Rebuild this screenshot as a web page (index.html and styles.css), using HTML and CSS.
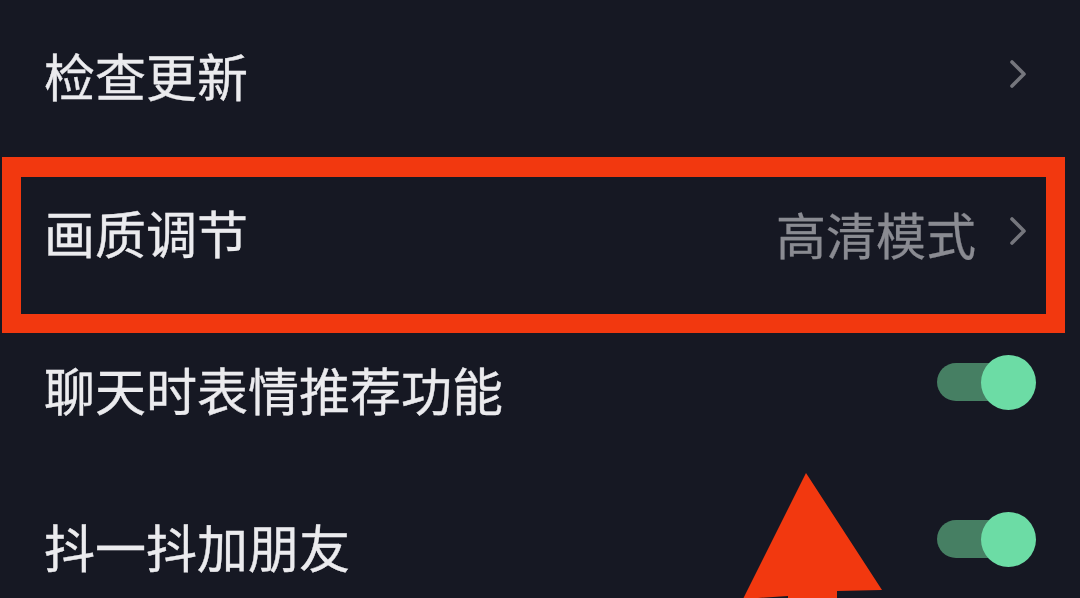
FILE: index.html
```html
<!DOCTYPE html>
<html lang="zh-CN">
<head>
<meta charset="utf-8">
<link rel="stylesheet" href="styles.css">
</head>
<body>
<div class="screen">
  <ul class="list">
    <li class="row">
      <span class="label">检查更新</span>
      <svg class="chev" viewBox="0 0 20 32" width="20" height="32"><path d="M4 4 L16 16 L4 28" /></svg>
    </li>
    <li class="row">
      <span class="label">画质调节</span>
      <span class="value">高清模式</span>
      <svg class="chev" viewBox="0 0 20 32" width="20" height="32"><path d="M4 4 L16 16 L4 28" /></svg>
    </li>
    <li class="row">
      <span class="label">聊天时表情推荐功能</span>
      <span class="toggle"><span class="knob"></span></span>
    </li>
    <li class="row">
      <span class="label">抖一抖加朋友</span>
      <span class="toggle"><span class="knob"></span></span>
    </li>
  </ul>
  <div class="highlight"></div>
  <svg class="arrow" viewBox="0 0 1080 598" width="1080" height="598">
    <polygon points="806,473 882,590 837,591 837,598 788,598 788,596 743,599" />
  </svg>
</div>
</body>
</html>
```
FILE: styles.css
```css
html, body {
  margin: 0;
  padding: 0;
  background: #161823;
}
.screen {
  position: relative;
  width: 1080px;
  height: 598px;
  overflow: hidden;
  background: #161823;
  font-family: "Noto Sans CJK SC", "Noto Sans", sans-serif;
}
.list {
  list-style: none;
  margin: 0;
  padding: 0;
  margin-top: -3px;
}
.row {
  display: flex;
  align-items: center;
  height: 157px;
  padding: 0 44px 0 44px;
}
.label {
  flex: 1;
  font-size: 51px;
  color: #ebebee;
  line-height: 1;
  -webkit-text-stroke: 0.4px #ebebee;
}
.value {
  font-size: 50px;
  line-height: 1;
  color: #8a8b92;
  margin-right: 32px;
  -webkit-text-stroke: 0.3px #8a8b92;
}
.chev {
  margin-right: 8px;
  margin-bottom: 4px;
}
.chev path {
  fill: none;
  stroke: #75767d;
  stroke-width: 3.6;
  stroke-linecap: round;
  stroke-linejoin: round;
}
.toggle {
  position: relative;
  width: 99px;
  height: 55px;
  margin-bottom: 15px;
}
.toggle::before {
  content: "";
  position: absolute;
  left: 0;
  top: 8.5px;
  width: 84px;
  height: 38px;
  border-radius: 19px;
  background: #467f63;
}
.knob {
  position: absolute;
  right: 0;
  top: 0;
  width: 55px;
  height: 55px;
  border-radius: 50%;
  background: #6cdca5;
}
.highlight {
  position: absolute;
  left: 2px;
  top: 157px;
  width: 1063px;
  height: 176px;
  box-sizing: border-box;
  border: 19px solid #f2380f;
  border-top-width: 20px;
}
.arrow {
  position: absolute;
  left: 0;
  top: 0;
}
.arrow polygon {
  fill: #f2380f;
}
```
